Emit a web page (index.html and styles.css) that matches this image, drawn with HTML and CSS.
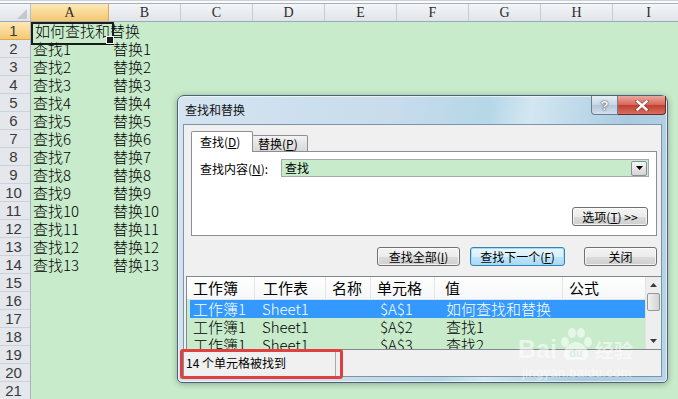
FILE: index.html
```html
<!DOCTYPE html>
<html lang="zh-CN">
<head>
<meta charset="utf-8">
<title>查找和替换</title>
<link rel="stylesheet" href="styles.css">
</head>
<body>
<div class="sheet">
  <div class="topstrip"></div>
  <div class="colhdr">
    <div class="corner"></div>
    <div class="ch wide sel">A</div>
    <div class="ch">B</div>
    <div class="ch">C</div>
    <div class="ch">D</div>
    <div class="ch">E</div>
    <div class="ch">F</div>
    <div class="ch">G</div>
    <div class="ch">H</div>
    <div class="ch">I</div>
  </div>
  <div class="sbody">
    <div class="rowhdrs">
      <div class="rh sel">1</div><div class="rh">2</div><div class="rh">3</div><div class="rh">4</div>
      <div class="rh">5</div><div class="rh">6</div><div class="rh">7</div><div class="rh">8</div>
      <div class="rh">9</div><div class="rh">10</div><div class="rh">11</div><div class="rh">12</div>
      <div class="rh">13</div><div class="rh">14</div><div class="rh">15</div><div class="rh">16</div>
      <div class="rh">17</div><div class="rh">18</div><div class="rh">19</div><div class="rh">20</div>
      <div class="rh">21</div>
    </div>
    <div class="cells">
      <div class="c a1">如何查找和替换</div>
      <div class="c">查找1</div><div class="c">替换1</div>
      <div class="c">查找2</div><div class="c">替换2</div>
      <div class="c">查找3</div><div class="c">替换3</div>
      <div class="c">查找4</div><div class="c">替换4</div>
      <div class="c">查找5</div><div class="c">替换5</div>
      <div class="c">查找6</div><div class="c">替换6</div>
      <div class="c">查找7</div><div class="c">替换7</div>
      <div class="c">查找8</div><div class="c">替换8</div>
      <div class="c">查找9</div><div class="c">替换9</div>
      <div class="c">查找10</div><div class="c">替换10</div>
      <div class="c">查找11</div><div class="c">替换11</div>
      <div class="c">查找12</div><div class="c">替换12</div>
      <div class="c">查找13</div><div class="c">替换13</div>
    </div>
  </div>
</div>

<div class="dlg">
  <div class="titlebar"><span class="title">查找和替换</span></div>
  <div class="capbtns">
    <div class="cap help">?</div>
    <div class="cap close">
      <svg width="14" height="11" viewBox="0 0 14 11"><path d="M2 1 L12 10 M12 1 L2 10" stroke="#4a1410" stroke-width="4" stroke-linecap="square" opacity=".35"/><path d="M2.5 1.5 L11.5 9.5 M11.5 1.5 L2.5 9.5" stroke="#fff" stroke-width="2.4" stroke-linecap="square"/></svg>
    </div>
  </div>
  <div class="client">
    <div class="tabs">
      <div class="tab active">查找(<u>D</u>)</div>
      <div class="tab">替换(<u>P</u>)</div>
    </div>
    <div class="panel">
      <div class="findrow">
        <span class="lbl">查找内容(<u>N</u>):</span>
        <div class="combo"><span class="ctext">查找</span><span class="drop"><svg width="7" height="4" viewBox="0 0 7 4"><path d="M0 0H7L3.5 4Z" fill="#000"/></svg></span></div>
      </div>
      <div class="optrow"><div class="btn opt">选项(<u>T</u>) &gt;&gt;</div></div>
    </div>
    <div class="btnrow">
      <div class="btn b1">查找全部(<u>I</u>)</div>
      <div class="btn b2 focus">查找下一个(<u>F</u>)</div>
      <div class="btn b3">关闭</div>
    </div>
    <div class="list">
      <div class="lv">
        <div class="lvh"><span>工作簿</span><span>工作表</span><span>名称</span><span>单元格</span><span>值</span><span>公式</span></div>
        <div class="lvr sel"><span>工作簿1</span><span>Sheet1</span><span></span><span>$A$1</span><span>如何查找和替换</span><span></span></div>
        <div class="lvr"><span>工作簿1</span><span>Sheet1</span><span></span><span>$A$2</span><span>查找1</span><span></span></div>
        <div class="lvr"><span>工作簿1</span><span>Sheet1</span><span></span><span>$A$3</span><span>查找2</span><span></span></div>
      </div>
      <div class="vscroll">
        <div class="sbtn"><svg width="7" height="4" viewBox="0 0 7 4"><path d="M0 4H7L3.5 0Z" fill="#3a3a3a"/></svg></div>
        <div class="thumb"></div>
        <div class="track"></div>
        <div class="sbtn"><svg width="7" height="4" viewBox="0 0 7 4"><path d="M0 0H7L3.5 4Z" fill="#3a3a3a"/></svg></div>
      </div>
    </div>
    <div class="status"><div class="spanel">14 个单元格被找到</div><div class="spanel2"></div></div>
  </div>
</div>

<div class="redbox"></div>

<div class="watermark">
  <div class="wm1"><span class="bai">Bai</span><svg class="paw" width="36" height="34" viewBox="0 0 36 34"><g fill="#fff"><ellipse cx="7" cy="14" rx="4" ry="5"/><ellipse cx="14" cy="5" rx="4" ry="5"/><ellipse cx="23" cy="5" rx="4" ry="5"/><ellipse cx="30" cy="14" rx="4" ry="5"/><path d="M18 14 C10 14 4 24 6 29 C8 34 14 32 18 31 C22 32 28 34 30 29 C32 24 26 14 18 14Z"/></g><text x="18" y="29" font-size="11" font-family="Liberation Sans" font-weight="bold" fill="#c8ebcb" text-anchor="middle">du</text></svg><span class="jy">经验</span></div>
  <div class="wm2">jingyan.baidu.com</div>
</div>
</body>
</html>
```

FILE: styles.css
```css
* { box-sizing: border-box; margin: 0; padding: 0; }
html, body { width: 678px; height: 399px; overflow: hidden; }
body {
  background: #c8ebcb;
  font-family: "Noto Sans CJK SC", sans-serif;
  color: #000;
  position: relative;
}

/* ---------- spreadsheet ---------- */
.topstrip {
  height: 4px;
  background: #fafbfc;
  border-top: 1px solid #cdd2d8;
  border-bottom: 1px solid #a6afba;
}
.colhdr {
  display: flex;
  height: 18px;
  background: linear-gradient(#f3f5f8, #e0e4e9);
  border-bottom: 1px solid #9eaab8;
}
.corner {
  flex: 0 0 31px;
  border-right: 1px solid #b5bcc6;
  position: relative;
}
.corner::after {
  content: "";
  position: absolute;
  right: 3px;
  bottom: 2px;
  border-left: 10px solid transparent;
  border-bottom: 10px solid #c3c8cf;
}
.ch {
  flex: 0 0 72px;
  border-right: 1px solid #c6ccd4;
  text-align: center;
  font: 14px/17px "Liberation Serif", serif;
  color: #2a2a2a;
}
.ch.wide { flex-basis: 78px; }
.ch.sel {
  background: linear-gradient(#fce9b9, #f5c86f);
  border-right-color: #d9aa55;
}
.sbody { display: flex; }
.rowhdrs {
  flex: 0 0 31px;
  background: #e4e7ec;
  border-right: 1px solid #a9b2bd;
}
.rh {
  height: 18px;
  border-bottom: 1px solid #cdd2d9;
  text-align: center;
  font: 15px/17px "Liberation Sans", sans-serif;
  color: #3a3a3a;
  padding-right: 3px;
}
.rh.sel { background: linear-gradient(#fce9b9, #f5c86f); border-bottom-color: #d9aa55; }
.cells {
  display: grid;
  grid-template-columns: 78px 72px;
  grid-auto-rows: 18px;
}
.c {
  font-size: 15px;
  line-height: 18px;
  white-space: nowrap;
  padding-left: 2px;
  font-weight: 300;
}
.c:nth-child(odd) { padding-left: 4px; }
.a1 {
  grid-column: span 2;
  position: relative;
  padding-left: 2px;
}
.a1::before {
  content: "";
  position: absolute;
  left: 0; top: 0; width: 79px; height: 19px;
  border: 2px solid #1b1b1b;
}
.a1::after {
  content: "";
  position: absolute;
  left: 75px; top: 14px; width: 6px; height: 6px;
  background: #1b1b1b;
  border: 1px solid #fff;
}

/* ---------- dialog ---------- */
.dlg {
  position: absolute;
  left: 177px; top: 95px;
  width: 491px; height: 288px;
  border: 1px solid #4d6177;
  border-radius: 7px 7px 5px 5px;
  background: linear-gradient(100deg, #d4e4f1 0%, #c8dcec 40%, #b6d7e7 58%, #d3e7f1 66%, #a9cbe1 84%, #bcd5e8 100%);
  box-shadow: inset 0 0 0 1px rgba(255,255,255,.6), 0 1px 6px rgba(0,0,0,.3);
  padding: 0 5px 5px;
  display: flex;
  flex-direction: column;
}
.titlebar {
  height: 28px;
  display: flex;
  align-items: center;
  padding-left: 2px;
}
.title { font-size: 12px; line-height: 14px; color: #111; }
.capbtns {
  position: absolute;
  top: 0; right: 1px;
  display: flex;
}
.cap {
  height: 19px;
  display: flex;
  align-items: center;
  justify-content: center;
}
.help {
  width: 27px;
  border: 1px solid #6b7d92;
  border-top: none;
  border-radius: 0 0 0 4px;
  background: linear-gradient(#e7eef5, #c9d6e3 50%, #b5c6d7 51%, #d4e0eb);
  color: #fff;
  font: bold 13px/17px "Liberation Sans", sans-serif;
  text-shadow: 0 0 2px #32465c, 0 0 1px #32465c;
}
.close {
  width: 48px;
  border: 1px solid #6e2b26;
  border-top: none;
  border-left: none;
  border-radius: 0 0 4px 0;
  background: linear-gradient(#eaa89d, #d7685a 48%, #c23f31 52%, #d7705f);
}
.client {
  height: 253px;
  background: #f0f0f0;
  border: 1px solid #7f93a8;
  display: flex;
  flex-direction: column;
  font-size: 12px;
}
.tabs {
  display: flex;
  align-items: flex-end;
  height: 26px;
  padding-left: 7px;
  position: relative;
  z-index: 1;
}
.tab {
  height: 16px;
  width: 56px;
  border: 1px solid #8c8e94;
  border-bottom: none;
  border-radius: 2px 2px 0 0;
  background: linear-gradient(#f3f3f3, #e4e4e4 50%, #d8d8d8);
  font-size: 12px;
  line-height: 15px;
  padding-left: 5px;
  margin-left: -1px;
}
.tab.active {
  width: 62px;
  height: 21px;
  margin-bottom: -1px;
  margin-left: 0;
  background: #fff;
  padding-left: 8px;
  line-height: 19px;
}
u { text-decoration: underline; text-underline-offset: 1px; }
.panel {
  margin-left: 7px;
  width: 466px;
  height: 85px;
  background: #fff;
  border: 1px solid #8c8e94;
  display: flex;
  flex-direction: column;
}
.findrow {
  display: flex;
  align-items: center;
  margin-top: 7px;
  padding-left: 8px;
}
.lbl { flex: 0 0 81px; font-size: 12px; }
.combo {
  width: 368px;
  height: 18px;
  background: #c8ebcb;
  border: 1px solid #a4a9b0;
  display: flex;
  align-items: center;
  justify-content: space-between;
}
.ctext { padding-left: 3px; font-size: 12px; line-height: 16px; }
.drop {
  width: 16px;
  height: 15px;
  margin-right: 1px;
  border: 1px solid #8a8f96;
  border-radius: 2px;
  background: linear-gradient(#f7f7f7, #e6e6e6 50%, #d4d4d4);
  display: flex;
  align-items: center;
  justify-content: center;
}
.optrow {
  display: flex;
  justify-content: flex-end;
  padding-right: 8px;
  margin-top: 30px;
}
.btn {
  height: 19px;
  border: 1px solid #707070;
  border-radius: 3px;
  background: linear-gradient(#f4f4f4, #ececec 50%, #dcdcdc 51%, #cfcfcf);
  box-shadow: inset 0 0 0 1px rgba(255,255,255,.7);
  font-size: 12px;
  line-height: 17px;
  text-align: center;
  white-space: nowrap;
}
.opt { width: 76px; }
.btnrow {
  display: flex;
  justify-content: flex-end;
  margin-top: 11px;
  padding-right: 4px;
}
.b1 { width: 83px; }
.b2 { width: 95px; margin-left: 10px; }
.b3 { width: 73px; margin-left: 19px; }
.btn.focus {
  border-color: #3c7fb1;
  background: linear-gradient(#eaf6fd, #d9f0fc 50%, #bee6fd 51%, #a7d9f5);
  box-shadow: inset 0 0 0 1px #9fdcf7;
}

/* results list */
.list {
  margin-top: 10px;
  margin-left: 2px;
  height: 74px;
  border: 1px solid #828790;
  border-right: none;
  display: flex;
  background: #c8ebcb;
}
.lv { flex: 1; overflow: hidden; font-weight: 300; }
.lvh, .lvr {
  display: grid;
  grid-template-columns: 68px 71px 45px 64px 128px 1fr;
  font-size: 15px;
  white-space: nowrap;
}
.lvh {
  height: 23px;
  line-height: 22px;
  background: linear-gradient(#ffffff, #f6f7f8);
  border-bottom: 1px solid #e0e2e5;
  font-weight: 400;
}
.lvh span { padding-left: 6px; border-right: 1px solid #e3e5e8; }
.lvh span:nth-child(2) { padding-left: 8px; }
.lvh span:nth-child(5) { padding-left: 10px; }
.lvh span:last-child { border-right: none; }
.lvr {
  height: 18px;
  line-height: 18px;
  margin-left: 3px;
  grid-template-columns: 65px 71px 45px 64px 128px 1fr;
}
.lvr span { padding-left: 3px; }
.lvr span:nth-child(2) { padding-left: 7px; }
.lvr span:nth-child(4) { padding-left: 9px; }
.lvr span:nth-child(5) { padding-left: 11px; }
.lvr.sel { background: #3399ff; color: #fff; }
.vscroll {
  width: 16px;
  display: flex;
  flex-direction: column;
  background: #eeeeee;
  border-left: 1px solid #e2e2e2;
}
.sbtn {
  height: 16px;
  display: flex;
  align-items: center;
  justify-content: center;
}
.thumb {
  height: 18px;
  margin: 0 1px;
  border: 1px solid #979797;
  border-radius: 2px;
  background: linear-gradient(90deg, #f2f2f2, #e1e1e1 50%, #d3d3d3);
}
.track { flex: 1; }

.status {
  height: 26px;
  display: flex;
  background: #f0f0f0;
}
.spanel {
  flex: 0 0 152px;
  border-right: 1px solid #a9a9a9;
  padding-left: 2px;
  line-height: 26px;
  font-size: 12px;
}
.spanel2 { flex: 1; }

/* annotation */
.redbox {
  position: absolute;
  left: 180px; top: 349px;
  width: 163px; height: 30px;
  border: 3px solid #e04040;
  border-radius: 3px;
}

/* watermark */
.watermark {
  position: absolute;
  left: 518px; top: 326px;
  width: 126px;
  opacity: .55;
  color: #fff;
  pointer-events: none;
}
.wm1 { display: flex; align-items: flex-end; height: 36px; }
.bai { font: bold 25px/26px "Liberation Sans", sans-serif; }
.paw { margin: 0 1px 0 1px; }
.jy { font-size: 19px; line-height: 24px; font-weight: 700; }
.wm2 { font: 13px/14px "Liberation Sans", sans-serif; margin-top: 4px; padding-left: 4px; letter-spacing: .3px; }
```
